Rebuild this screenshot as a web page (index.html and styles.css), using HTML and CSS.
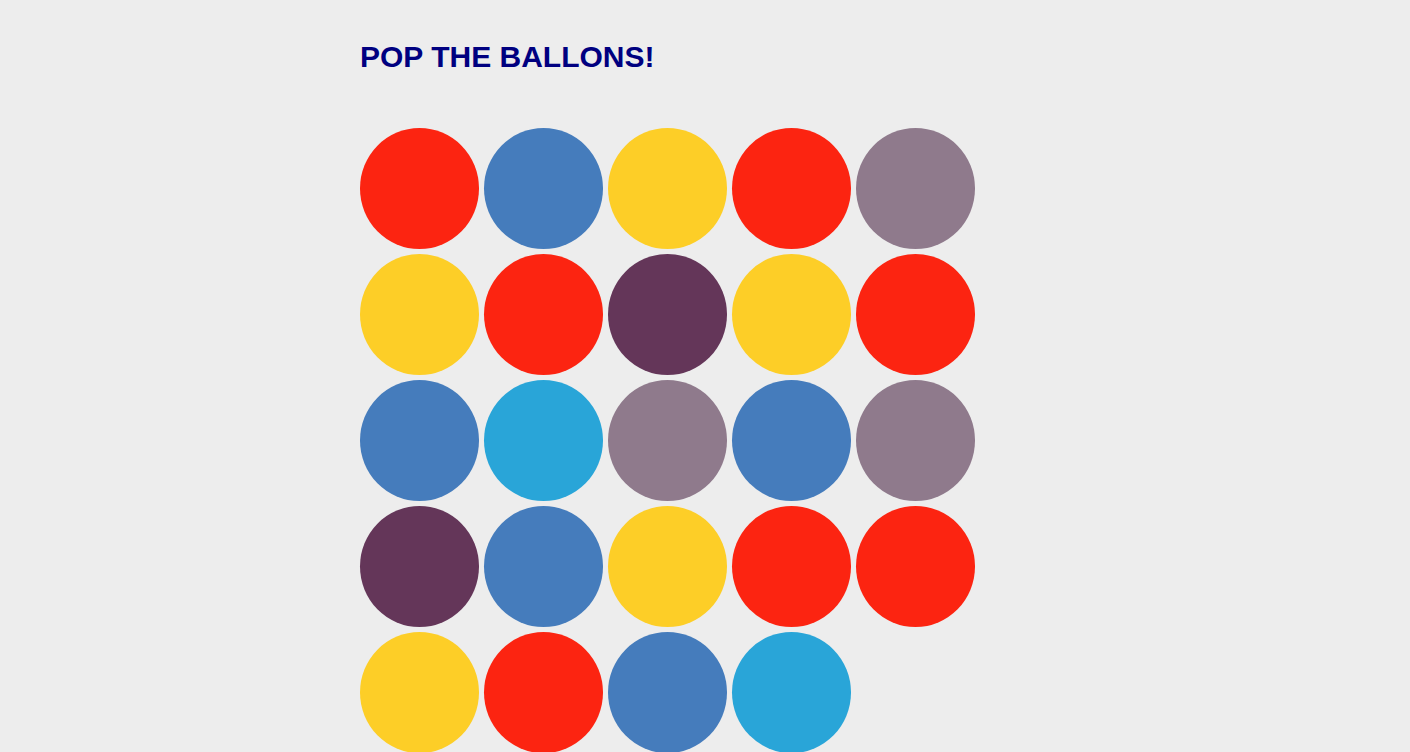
FILE: index.html
```html
<!DOCTYPE html>
<html>
<head>
<meta charset="utf-8">
<link rel="stylesheet" href="styles.css">
</head>
<body>
<div class="page">
  <h1 class="title">POP THE BALLONS!</h1>
  <div class="grid">
    <div class="balloon red"></div>
    <div class="balloon blue"></div>
    <div class="balloon yellow"></div>
    <div class="balloon red"></div>
    <div class="balloon mauve"></div>
    <div class="balloon yellow"></div>
    <div class="balloon red"></div>
    <div class="balloon plum"></div>
    <div class="balloon yellow"></div>
    <div class="balloon red"></div>
    <div class="balloon blue"></div>
    <div class="balloon cyan"></div>
    <div class="balloon mauve"></div>
    <div class="balloon blue"></div>
    <div class="balloon mauve"></div>
    <div class="balloon plum"></div>
    <div class="balloon blue"></div>
    <div class="balloon yellow"></div>
    <div class="balloon red"></div>
    <div class="balloon red"></div>
    <div class="balloon yellow"></div>
    <div class="balloon red"></div>
    <div class="balloon blue"></div>
    <div class="balloon cyan"></div>
  </div>
</div>
</body>
</html>
```

FILE: styles.css
```css
html, body {
  margin: 0;
  padding: 0;
  background: #ededed;
}
.page {
  width: 690px;
  margin: 0 auto;
  padding-top: 39px;
}
.title {
  margin: 0 0 53px 0;
  font-family: "Liberation Sans", Arial, sans-serif;
  font-weight: bold;
  font-size: 30px;
  line-height: 36px;
  color: #000080;
}
.grid {
  display: grid;
  grid-template-columns: repeat(5, 119px);
  column-gap: 5px;
  row-gap: 5px;
}
.balloon {
  width: 119px;
  height: 121px;
  border-radius: 50%;
}
.red { background: #fc2411; }
.blue { background: #457cbc; }
.yellow { background: #fdce27; }
.mauve { background: #8f7a8c; }
.plum { background: #643659; }
.cyan { background: #29a5d8; }
```
